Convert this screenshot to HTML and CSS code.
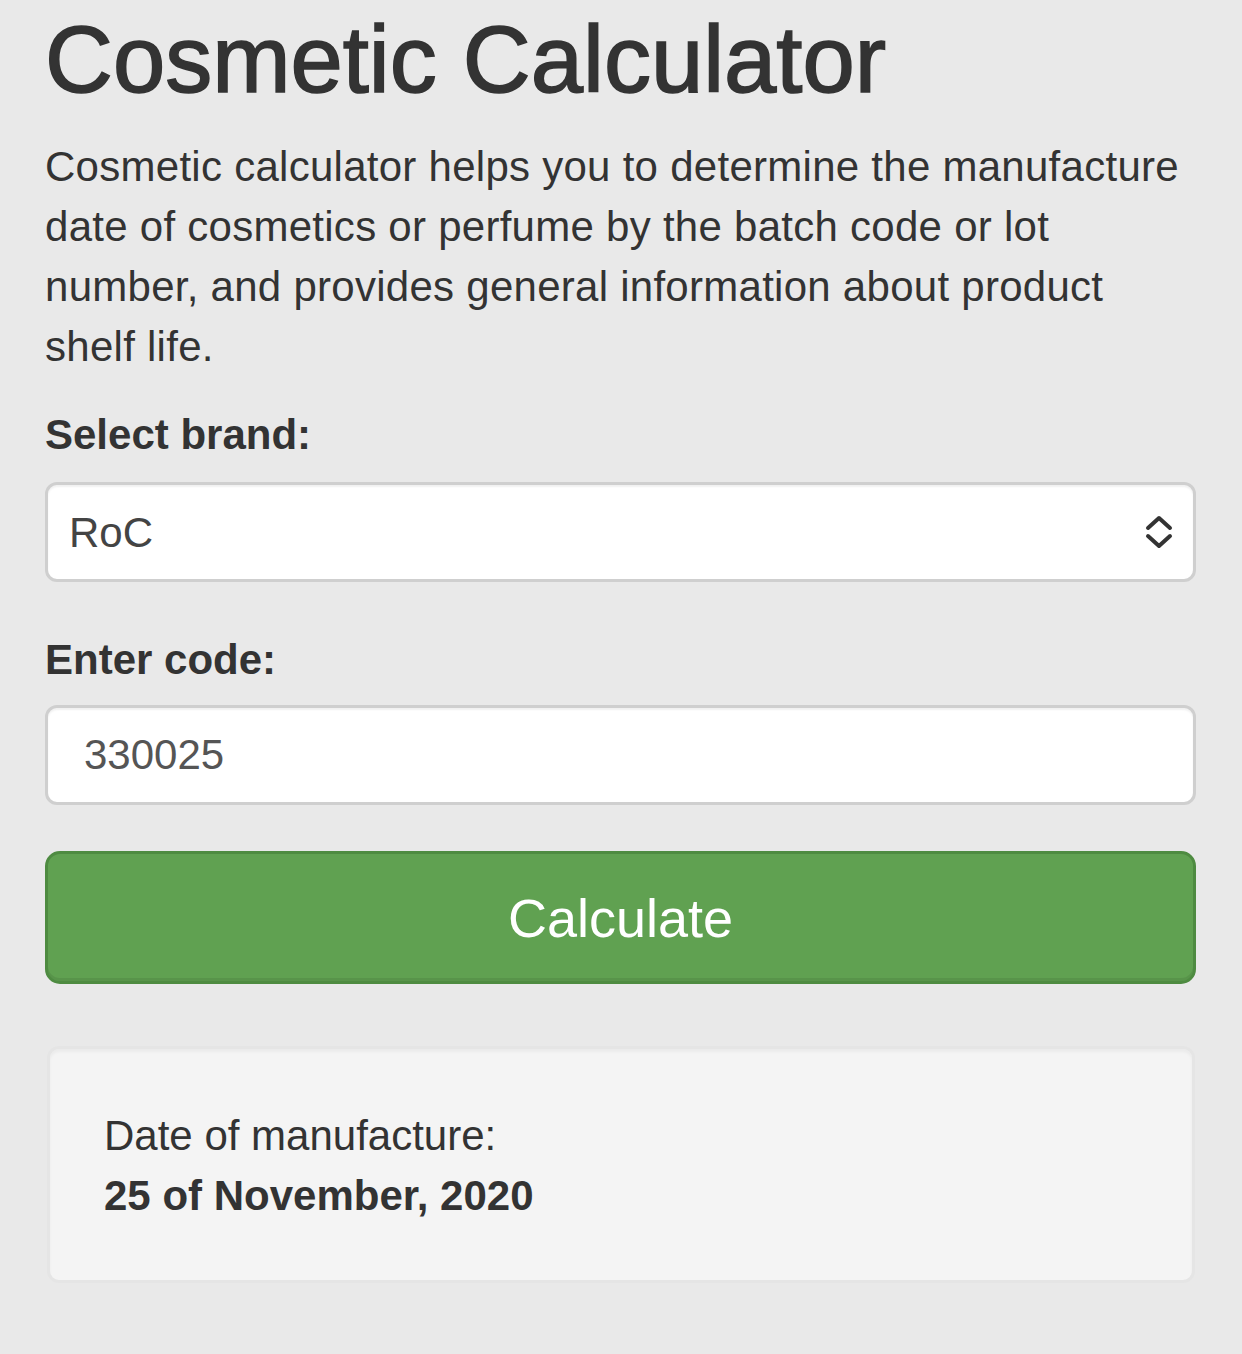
FILE: index.html
```html
<!DOCTYPE html>
<html lang="en">
<head>
<meta charset="utf-8">
<title>Cosmetic Calculator</title>
<link rel="stylesheet" href="styles.css">
</head>
<body>
<main class="page">
  <h1 class="title">Cosmetic Calculator</h1>
  <p class="intro">Cosmetic calculator helps you to determine the manufacture date of cosmetics or perfume by the batch code or lot number, and provides general information about product shelf life.</p>
  <form class="calc-form">
    <div class="form-group">
      <label class="field-label" for="brand">Select brand:</label>
      <div class="select-wrap">
        <select id="brand" class="control select-control">
          <option>RoC</option>
        </select>
        <svg class="select-arrows" width="30" height="36" viewBox="0 0 30 36" aria-hidden="true">
          <path d="M4 14 L15 4 L26 14" fill="none" stroke="#333" stroke-width="4" stroke-linecap="round" stroke-linejoin="round"/>
          <path d="M4 22 L15 32 L26 22" fill="none" stroke="#333" stroke-width="4" stroke-linecap="round" stroke-linejoin="round"/>
        </svg>
      </div>
    </div>
    <div class="form-group form-group-last">
      <label class="field-label" for="code">Enter code:</label>
      <input id="code" class="control input-control" type="text" value="330025">
    </div>
    <button type="button" class="btn-calc">Calculate</button>
  </form>
  <div class="well">
    <div class="well-line">Date of manufacture:</div>
    <div class="well-line well-strong">25 of November, 2020</div>
  </div>
</main>
</body>
</html>
```
FILE: styles.css
```css
html, body {
  margin: 0;
  padding: 0;
  background: #e9e9e9;
}
body {
  font-family: "Liberation Sans", Arial, Helvetica, sans-serif;
  color: #333;
  font-size: 42px;
  line-height: 60px;
}
.page {
  padding: 8px 46px 60px 45px;
}
.title {
  margin: 0;
  font-size: 94px;
  line-height: 103px;
  font-weight: 400;
  color: #333;
  -webkit-text-stroke: 1.6px #333;
}
.intro {
  margin: 26px 0 0 0;
  letter-spacing: 0.27px;
}
.calc-form {
  margin-top: 28px;
  display: flex;
  flex-direction: column;
}
.form-group {
  display: flex;
  flex-direction: column;
  margin-bottom: 48px;
}
.form-group-last {
  margin-bottom: 46px;
}
.field-label {
  font-weight: 700;
  margin-bottom: 17px;
}
.form-group + .form-group .field-label {
  margin-bottom: 15px;
}
.select-wrap {
  position: relative;
  height: 100px;
}
.control {
  box-sizing: border-box;
  display: block;
  width: 100%;
  height: 100px;
  border: 3px solid #cfcfcf;
  border-radius: 12px;
  background: #fff;
  font-family: "Liberation Sans", Arial, Helvetica, sans-serif;
  font-size: 42px;
  color: #555;
  margin: 0;
  box-shadow: inset 0 2px 2px rgba(0,0,0,0.06);
}
.select-control {
  appearance: none;
  -webkit-appearance: none;
  padding: 0 60px 0 21px;
  color: #444;
}
.select-arrows {
  position: absolute;
  right: 22px;
  top: 32px;
}
.input-control {
  padding: 0 36px;
  outline: none;
}
.btn-calc {
  box-sizing: border-box;
  height: 133px;
  width: 100%;
  border: 3px solid #4e8b41;
  border-radius: 15px;
  background: #60a151;
  color: #fff;
  font-family: "Liberation Sans", Arial, Helvetica, sans-serif;
  font-size: 54px;
  cursor: pointer;
  box-shadow: inset 0 -3px 0 rgba(0,0,0,0.08);
}
.well {
  margin: 62px 1px 0 2px;
  background: #f4f4f4;
  border: 3px solid #e5e5e5;
  border-radius: 12px;
  padding: 57px 54px 54px;
  box-shadow: inset 0 3px 3px rgba(0,0,0,0.04);
}
.well-strong {
  font-weight: 700;
}
```
